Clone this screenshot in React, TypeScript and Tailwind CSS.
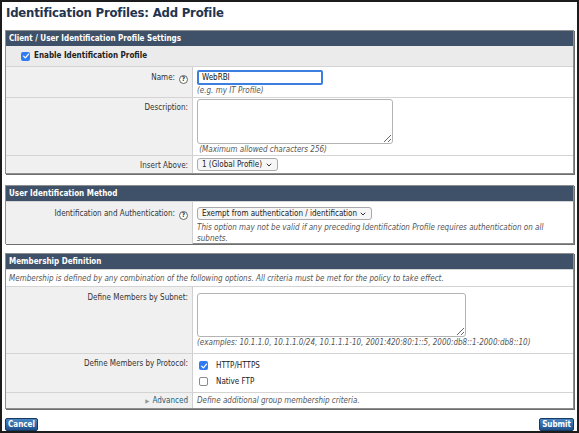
import React from 'react';
import { ChevronDown } from 'lucide-react';

const Check: React.FC<{ on?: boolean }> = ({ on }) =>
  on ? (
    <span className="w-[9px] h-[9px] rounded-[2px] bg-[#2f7bf4] flex items-center justify-center shrink-0">
      <svg viewBox="0 0 10 10" className="w-[8px] h-[8px]">
        <path d="M2 5.2 L4.2 7.4 L8.2 2.6" fill="none" stroke="white" strokeWidth="1.6" strokeLinecap="round" strokeLinejoin="round" />
      </svg>
    </span>
  ) : (
    <span className="w-[9px] h-[9px] rounded-[2px] bg-white border border-[#8a8a8a] shrink-0" />
  );

const Help = () => (
  <span className="inline-flex w-[9px] h-[9px] rounded-full border border-[#666] bg-white items-center justify-center text-[6.5px] font-bold leading-none text-[#333] ml-[4px] align-[-1px]">
    ?
  </span>
);

const Select: React.FC<{ text: string; w: string }> = ({ text, w }) => (
  <div className={`${w} h-[13px] border border-[#a9a9a9] rounded-[3px] bg-[#f6f6f6] flex items-center justify-between px-[4px] text-[8px] text-[#222]`}>
    <span>{text}</span>
    <ChevronDown className="w-[8px] h-[8px] text-[#333]" strokeWidth={3} />
  </div>
);

const Panel: React.FC<{ title: string; className?: string; children: React.ReactNode }> = ({ title, className, children }) => (
  <div className={`border border-[#8e8e8e] shadow-[1px_1px_0_#6e6e6e] ${className ?? ''}`}>
    <div className="h-[15px] bg-[#3e5169] text-white font-bold text-[8px] pl-[3px] flex items-center">{title}</div>
    {children}
  </div>
);

const Row: React.FC<{ label: React.ReactNode; h: string; lpt?: string; cls?: string; children: React.ReactNode }> = ({ label, h, lpt, cls, children }) => (
  <div className={`grid grid-cols-[187px_1fr] border-t border-[#d4d4d4] ${h}`}>
    <div className={`bg-[#f0f0f0] border-r border-[#cfcfcf] text-right pr-[4px] text-[8px] leading-[11px] text-[#333] ${lpt ?? ''}`}>{label}</div>
    <div className={`pl-[4px] text-[8px] leading-[11px] ${cls ?? ''}`}>{children}</div>
  </div>
);

const Hint: React.FC<{ children: React.ReactNode }> = ({ children }) => (
  <div className="italic text-[#555] text-[8px] leading-[11px]">{children}</div>
);

export default function App() {
  return (
    <div className="w-[579px] h-[433px] border-2 border-[#1c1c1c] bg-white px-[3px] flex flex-col font-['DejaVu_Sans_Condensed','DejaVu_Sans',sans-serif] text-[#333] overflow-hidden">
      <h1 className="h-[31px] pt-[3px] pl-[1px] text-[13px] tracking-[-0.2px] font-bold text-[#22344f] leading-[16px]">
        Identification Profiles: Add Profile
      </h1>

      <Panel title="Client / User Identification Profile Settings">
        <div className="h-[20px] bg-[#ebebeb] flex items-center pl-[15px] gap-[4px]">
          <Check on />
          <span className="font-bold text-[8px] text-[#222]">Enable Identification Profile</span>
        </div>
        <Row label={<>Name:<Help /></>} h="h-[31px]" lpt="pt-[5px]" cls="pt-[3px]">
          <input
            readOnly
            value="WebRBI"
            className="block w-[126px] h-[15px] border-2 border-[#3c7fe0] rounded-[2px] px-[3px] text-[8px] text-[#111] outline-none"
          />
          <Hint>(e.g. my IT Profile)</Hint>
        </Row>
        <Row label="Description:" h="h-[58px]" lpt="pt-[4px]" cls="pt-[1px]">
          <textarea readOnly className="block w-[196px] h-[45px] border border-[#b3b3b3] rounded-[3px] bg-white outline-none" />
          <Hint>&nbsp;(Maximum allowed characters 256)</Hint>
        </Row>
        <Row label="Insert Above:" h="h-[18px]" lpt="pt-[4px]" cls="flex items-center">
          <Select text="1 (Global Profile)" w="w-[81px]" />
        </Row>
      </Panel>

      <Panel title="User Identification Method" className="mt-[11px]">
        <Row label={<>Identification and Authentication:<Help /></>} h="h-[42px]" lpt="pt-[6px]" cls="pt-[5px]">
          <Select text="Exempt from authentication / identification" w="w-[175px]" />
          <div className="mt-[2px]">
            <Hint>
              This option may not be valid if any preceding Identification Profile requires authentication on all
              <br />
              subnets.
            </Hint>
          </div>
        </Row>
      </Panel>

      <Panel title="Membership Definition" className="mt-[9px]">
        <div className="h-[17px] border-t border-[#d4d4d4] flex items-center pl-[3px]">
          <Hint>
            Membership is defined by any combination of the following options. All criteria must be met for the policy to take effect.
          </Hint>
        </div>
        <Row label="Define Members by Subnet:" h="h-[67px]" lpt="pt-[5px]" cls="pt-[6px]">
          <textarea readOnly className="block w-[269px] h-[44px] border border-[#b3b3b3] rounded-[3px] bg-white outline-none" />
          <Hint>(examples: 10.1.1.0, 10.1.1.0/24, 10.1.1.1-10, 2001:420:80:1::5, 2000:db8::1-2000:db8::10)</Hint>
        </Row>
        <Row label="Define Members by Protocol:" h="h-[39px]" lpt="pt-[4px]" cls="pt-[6px] flex flex-col gap-[5px]">
          <div className="flex items-center gap-[8px] pl-[2px] h-[11px]">
            <Check on />
            <span className="text-[#222]">HTTP/HTTPS</span>
          </div>
          <div className="flex items-center gap-[8px] pl-[2px] h-[11px]">
            <Check />
            <span className="text-[#222]">Native FTP</span>
          </div>
        </Row>
        <Row
          label={
            <>
              <span className="text-[#999] text-[6px] mr-[3px]">▶</span>
              <span className="text-[#1d5b7a]">Advanced</span>
            </>
          }
          h="h-[16px]"
          lpt="pt-[2px]"
          cls="pt-[2px]"
        >
          <Hint>Define additional group membership criteria.</Hint>
        </Row>
      </Panel>

      <div className="flex justify-between mt-[9px]">
        <button className="h-[13px] px-[2px] rounded-[2px] border border-[#173a63] bg-gradient-to-b from-[#4a86c2] to-[#1f5089] text-white text-[8px] font-bold leading-none">
          Cancel
        </button>
        <button className="h-[13px] px-[2px] rounded-[2px] border border-[#173a63] bg-gradient-to-b from-[#4a86c2] to-[#1f5089] text-white text-[8px] font-bold leading-none">
          Submit
        </button>
      </div>
    </div>
  );
}
